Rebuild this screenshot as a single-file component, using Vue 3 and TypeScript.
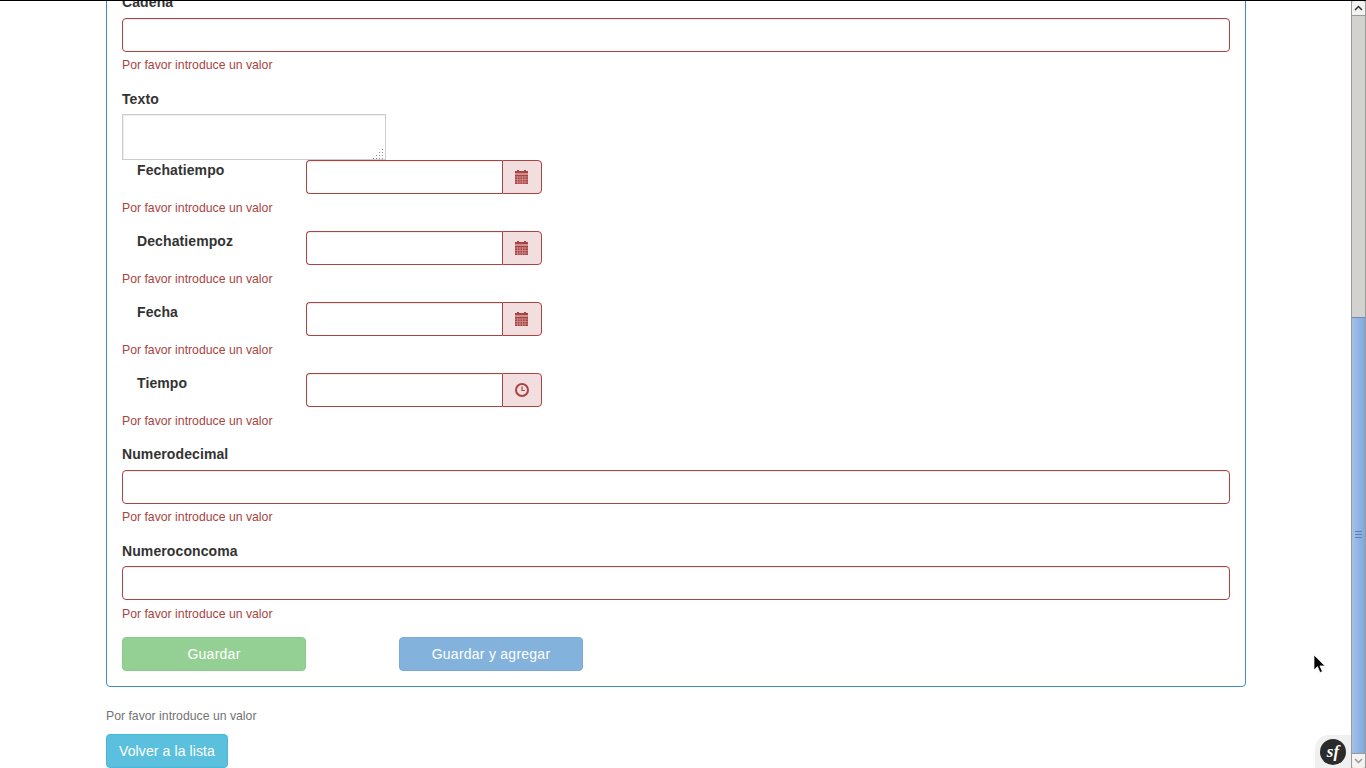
<template>
  <div class="page">
    <div class="top-line"></div>
    <div class="viewport">
      <main class="content">
        <form class="box" @submit.prevent>
          <div class="group first">
            <label>Cadena</label>
            <input class="field" type="text" />
            <p class="error">{{ errorText }}</p>
          </div>
          <div class="group area-group">
            <label>Texto</label>
            <div class="area-wrap">
              <textarea class="area"></textarea>
              <svg class="grip" width="12" height="12" viewBox="0 0 12 12" fill="#8c8c8c">
                <rect x="9" y="1" width="1" height="1" />
                <rect x="6" y="4" width="1" height="1" />
                <rect x="9" y="4" width="1" height="1" />
                <rect x="3" y="7" width="1" height="1" />
                <rect x="6" y="7" width="1" height="1" />
                <rect x="9" y="7" width="1" height="1" />
                <rect x="0" y="10" width="1" height="1" />
                <rect x="3" y="10" width="1" height="1" />
                <rect x="6" y="10" width="1" height="1" />
                <rect x="9" y="10" width="1" height="1" />
              </svg>
            </div>
          </div>
          <div v-for="row in dateRows" :key="row.label" class="group">
            <div class="date-row">
              <label class="date-label">{{ row.label }}</label>
              <div class="date-input">
                <input type="text" />
                <span class="addon">
                  <!-- reloj -->
                  <svg v-if="row.icon === 'clock'" width="14" height="14" viewBox="0 0 14 14" fill="none" stroke="#a94442">
                    <circle cx="7" cy="7" r="6" stroke-width="2" />
                    <path d="M7 3.5V7.5H10" stroke-width="1.2" />
                  </svg>
                  <!-- calendario -->
                  <svg v-else class="cal" width="13" height="14" viewBox="0 0 13 14" fill="#a94442">
                    <path d="M2 0h2v1h5V0h2v1h2v2.500H0V1h2z" />
                    <path d="M0 4.500h13V14H0z" />
                    <path d="M0 7h13M0 9.500h13M0 12h13M2.500 6v8M5 6v8M7.500 6v8M10 6v8" stroke="#f2dede" stroke-width=".7" opacity=".55" />
                  </svg>
                </span>
              </div>
            </div>
            <p class="error">{{ errorText }}</p>
          </div>
          <div class="group decimal-group">
            <label>Numerodecimal</label>
            <input class="field" type="text" />
            <p class="error">{{ errorText }}</p>
          </div>
          <div class="group">
            <label>Numeroconcoma</label>
            <input class="field" type="text" />
            <p class="error">{{ errorText }}</p>
          </div>
          <div class="actions">
            <button class="btn green" type="button" disabled>Guardar</button>
            <button class="btn blue" type="button" disabled>Guardar y agregar</button>
          </div>
        </form>
        <p class="hint">{{ errorText }}</p>
        <a class="back" href="#">Volver a la lista</a>
      </main>
      <div class="scrollbar">
        <div class="arrow">
          <svg width="9" height="6" viewBox="0 0 9 6" fill="none" stroke="#333" stroke-width="1.5"><path d="M1 5l3.5-3.5L8 5" /></svg>
        </div>
        <div class="track"></div>
        <div class="thumb">
          <span class="lines"></span>
        </div>
        <div class="arrow down">
          <svg width="9" height="6" viewBox="0 0 9 6" fill="none" stroke="#999" stroke-width="1.5"><path d="M1 1l3.5 3.5L8 1" /></svg>
        </div>
      </div>
    </div>
    <svg class="cursor" width="13" height="20" viewBox="0 0 13 20">
      <path d="M1 1v15l3.5-3.4L7 18.5l2.4-1-2.500-5.600H12z" fill="#000" stroke="#fff" stroke-width=".7" />
    </svg>
    <div class="sf-toolbar">
      <span class="sf-logo">sf</span>
    </div>
  </div>
</template>

<script setup lang="ts">
interface DateRow {
  label: string
  icon: 'calendar' | 'clock'
}

const errorText = 'Por favor introduce un valor'

const dateRows: DateRow[] = [
  { label: 'Fechatiempo', icon: 'calendar' },
  { label: 'Dechatiempoz', icon: 'calendar' },
  { label: 'Fecha', icon: 'calendar' },
  { label: 'Tiempo', icon: 'clock' },
]
</script>

<style>
html,
body {
  margin: 0;
  overflow: hidden;
  background: #fff;
}
</style>

<style scoped>
.page {
  position: relative;
  height: 768px;
  overflow: hidden;
  font-family: "Liberation Sans", Arial, sans-serif;
  font-size: 14px;
  line-height: 20px;
  color: #333;
  display: flex;
  flex-direction: column;
}

.top-line {
  height: 1px;
  background: #000;
  flex: none;
}

.viewport {
  flex: 1;
  display: flex;
  min-height: 0;
}

.content {
  flex: 1;
  min-width: 0;
  padding-left: 106px;
  overflow: hidden;
}

.box {
  width: 1140px;
  box-sizing: border-box;
  margin-top: -25px;
  padding: 16px 15px 15px;
  border: 1px solid #428bca;
  border-radius: 4px;
}

.group {
  display: flex;
  flex-direction: column;
}

label {
  display: block;
  font-weight: 700;
  letter-spacing: 0.1px;
  height: 20px;
  margin-bottom: 5px;
}

.first label {
  margin-top: -1px;
  margin-bottom: 6px;
}

.field,
.date-input input {
  box-sizing: border-box;
  height: 34px;
  border: 1px solid #a94442;
  border-radius: 4px;
  box-shadow: inset 0 1px 1px rgba(0, 0, 0, 0.075);
  outline: none;
  padding: 6px 12px;
  font: inherit;
  background: #fff;
}

.error {
  margin: 5px 0 14px;
  height: 18px;
  line-height: 18px;
  font-size: 12.25px;
  color: #a94442;
}

.first .error,
.decimal-group .error {
  margin: 4px 0 15px;
}

.area-wrap {
  position: relative;
  width: 264px;
  height: 46px;
}

.area {
  display: block;
  box-sizing: border-box;
  width: 264px;
  height: 46px;
  border: 1px solid #cdcdcd;
  box-shadow: inset 1px 1px 0 #eeeeee;
  outline: none;
  resize: none;
  background: #fff;
}

.grip {
  position: absolute;
  right: 1px;
  bottom: 0;
}

.date-row {
  display: flex;
  height: 34px;
}

.date-label {
  width: 184px;
  box-sizing: border-box;
  padding-left: 15px;
  margin: 0;
}

.date-input {
  display: flex;
  width: 236px;
}

.date-input input {
  flex: 1;
  min-width: 0;
  border-right: 0;
  border-radius: 4px 0 0 4px;
}

.addon {
  box-sizing: border-box;
  width: 40px;
  display: flex;
  align-items: center;
  justify-content: center;
  background: #f2dede;
  border: 1px solid #a94442;
  border-radius: 0 4px 4px 0;
}

.cal {
  margin-right: 1px;
}

.decimal-group label {
  margin-bottom: 6px;
}

.actions {
  display: flex;
  gap: 93px;
}

.btn {
  box-sizing: border-box;
  width: 184px;
  height: 34px;
  border: 1px solid;
  border-radius: 4px;
  font: inherit;
  letter-spacing: 0.25px;
  color: #fff;
  opacity: 0.65;
  padding: 0;
}

.green {
  background: #5cb85c;
  border-color: #4cae4c;
}

.blue {
  background: #428bca;
  border-color: #357ebd;
}

.hint {
  margin: 19px 0 8px;
  height: 20px;
  font-size: 12.25px;
  color: #737373;
}

.back {
  display: inline-block;
  box-sizing: border-box;
  width: 122px;
  height: 34px;
  line-height: 32px;
  text-align: center;
  text-decoration: none;
  letter-spacing: 0.1px;
  color: #fff;
  background: #5bc0de;
  border: 1px solid #46b8da;
  border-radius: 4px;
}

.scrollbar {
  flex: none;
  width: 15px;
  box-sizing: border-box;
  display: flex;
  flex-direction: column;
  background: #d4d2ce;
  border-left: 1px solid #9a9a9a;
  border-right: 1px solid #9a9a9a;
}

.arrow {
  flex: none;
  height: 15px;
  box-sizing: border-box;
  background: #f4f3f1;
  border-bottom: 1px solid #9a9a9a;
  border-radius: 3px 3px 0 0;
  display: flex;
  align-items: center;
  justify-content: center;
}

.arrow.down {
  border-bottom: 0;
  border-top: 1px solid #9a9a9a;
  border-radius: 0 0 3px 3px;
}

.track {
  flex: none;
  height: 301px;
}

.thumb {
  flex: 1;
  display: flex;
  flex-direction: column;
  align-items: center;
  padding-top: 213px;
  background: linear-gradient(90deg, #a3c2ea, #7ea7da);
  border-top: 1px solid #6c8bb8;
}

.lines {
  width: 7px;
  height: 7px;
  background: repeating-linear-gradient(180deg, #5a7fb0 0 1px, transparent 1px 3px);
}

.cursor {
  position: absolute;
  left: 1313px;
  top: 654px;
}

.sf-toolbar {
  position: absolute;
  left: 1315px;
  top: 735px;
  width: 36px;
  height: 33px;
  background: #f0f0f0;
  border-radius: 14px 0 0 0;
}

.sf-logo {
  position: absolute;
  left: 5px;
  top: 4px;
  width: 26px;
  height: 26px;
  border-radius: 50%;
  background: #2b2b2b;
  color: #fff;
  font: italic 700 17px/25px "Liberation Serif", serif;
  text-align: center;
}
</style>
